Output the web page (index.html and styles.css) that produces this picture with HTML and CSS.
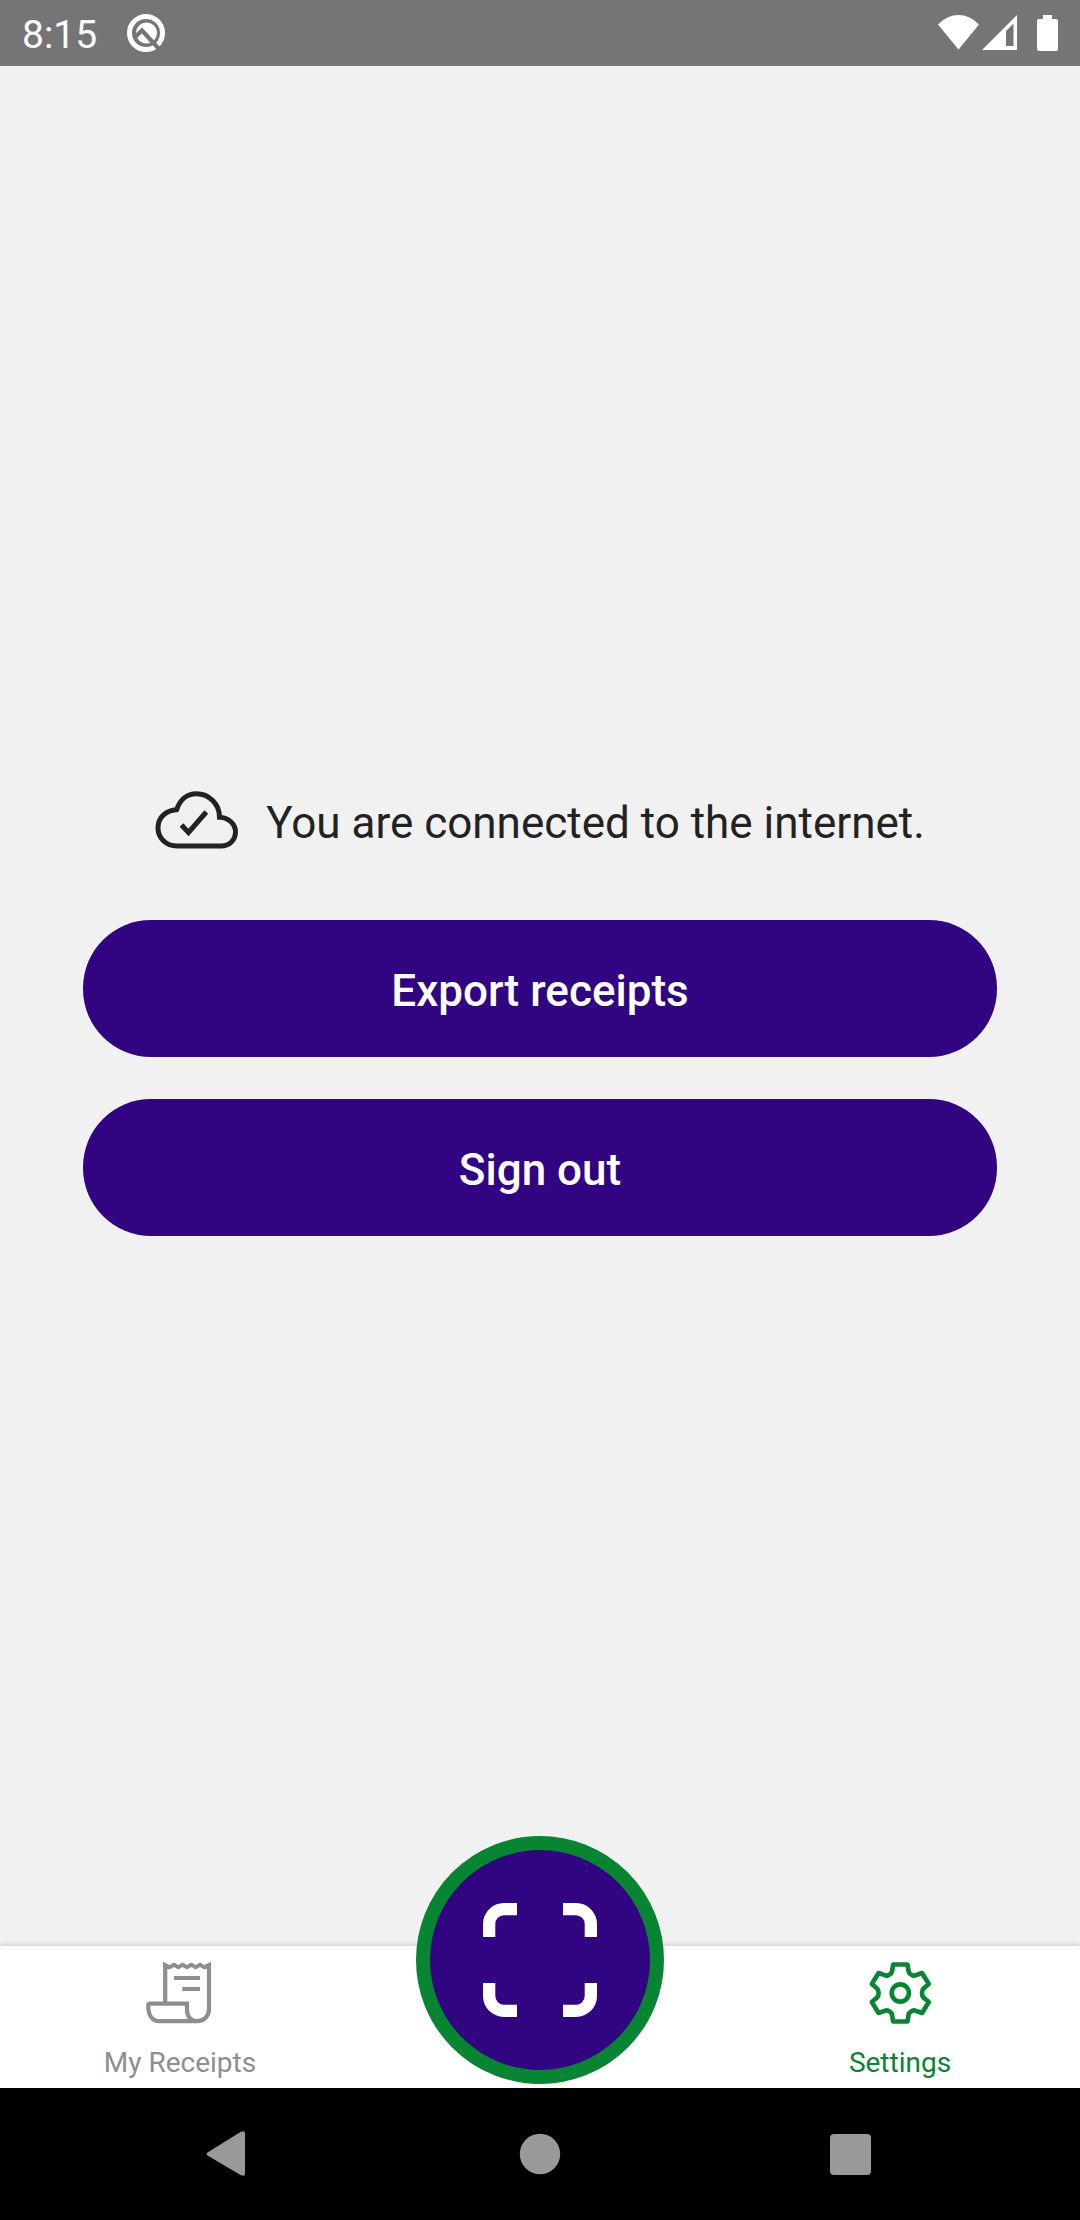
FILE: index.html
```html
<!DOCTYPE html>
<html lang="en">
<head>
<meta charset="utf-8">
<meta name="viewport" content="width=device-width, initial-scale=1">
<title>Settings</title>
<link rel="stylesheet" href="styles.css">
</head>
<body>
<header class="status">
  <span class="status-time">8:15</span>
  <svg class="status-app" width="40" height="40" viewBox="0 0 40 40" fill="none" aria-hidden="true">
    <circle cx="20" cy="20" r="16.5" stroke="#fff" stroke-width="5"/>
    <circle cx="20.500" cy="20" r="10.500" fill="#fff"/>
    <path d="M8 25 16 17.500 34 37" stroke="#757575" stroke-width="4.200"/>
  </svg>
  <svg class="status-system" width="120" height="40" viewBox="938 13 120 40" fill="#fff" aria-hidden="true">
    <path d="M938 24.500Q947 15 958.500 15T979 24.500L958.500 49.500Z"/>
    <path fill-rule="evenodd" d="M982 50 1017 15V50ZM1006 31V46H1013.500V23.500Z"/>
    <path d="M1043 15h9v4h4q2 0 2 2v28q0 2-2 2h-17q-2 0-2-2v-28q0-2 2-2h4z"/>
  </svg>
</header>

<main class="content">
  <p class="connection">
    <svg width="84" height="88" viewBox="0 0 84 88" fill="none" stroke="#222" stroke-width="5" aria-hidden="true">
      <path d="M23.500 33.500C11 34 3 41 3 52 3 62 11 70 22 70H66C74.500 70 80.500 64 80.500 56 80.500 48 73.500 41.500 64.500 41.200 64.500 28 54 17.800 41.500 17.800 32 17.800 24.500 24 21.500 34.500"/>
      <path d="M26.500 49 33.500 56.500 51.300 36"/>
    </svg>
    <span class="connection-text">You are connected to the internet.</span>
  </p>
  <div class="actions">
    <button class="action" type="button">Export receipts</button>
    <button class="action" type="button">Sign out</button>
  </div>
</main>

<nav class="tabs" aria-label="Main">
  <a class="tab" href="#receipts">
    <svg width="68" height="68" viewBox="0 0 68 68" fill="none" stroke="currentColor" stroke-width="4.200" aria-hidden="true">
      <path d="M19.200 44V7M63 7V50C63 57 58 62.200 51 62.200H14C6 62.200 2.200 56 2.200 46.500 2.200 45 3.200 44.700 4.500 44.700H41V51C41 58 45.500 62.200 51 62.200"/>
      <path d="M28 19H54M36.300 30H54"/>
      <path fill="currentColor" stroke="none" d="M17 2.700 23.700 6 28 3.500 32.300 6 36.500 3.500 41 6 45.300 3.500 49.700 6 54 3.500 58.300 6 65 2.700V8.500L58.300 10.500 54 8 49.700 10.500 45.300 8 41 10.500 36.500 8 32.300 10.500 28 8 23.700 10.500 17 8.500Z"/>
    </svg>
    <span>My Receipts</span>
  </a>
  <button class="scan" type="button" aria-label="Scan receipt">
    <svg width="114" height="114" viewBox="0 0 114 114" fill="none" stroke="#fff" stroke-width="12.300" aria-hidden="true">
      <path d="M34 6.150H21A14.850 14.850 0 0 0 6.150 21V34M80 6.150H93A14.850 14.850 0 0 1 107.850 21V34M34 107.850H21A14.850 14.850 0 0 1 6.150 93V80M80 107.850H93A14.850 14.850 0 0 0 107.850 93V80"/>
    </svg>
  </button>
  <a class="tab tab-active" href="#settings" aria-current="page">
    <svg width="68" height="68" viewBox="0 0 68 68" fill="none" stroke="currentColor" stroke-width="4.600" stroke-linejoin="round" aria-hidden="true">
      <circle cx="34.300" cy="34" r="8.600"/>
      <path d="M27.100 5.500H41.500L42.500 12Q43 14.500 45 15.500L46.500 16.300Q48 17 50 16.200L56 14 62.800 25 57.500 29.500Q56 31 56 34T57.500 38.500L62.800 43 56 54 50 51.800Q48 51 46.500 51.700L45 52.500Q43 53.500 42.500 56L41.500 62.500H27.100L26.100 56Q25.600 53.500 23.600 52.500L22.100 51.700Q20.600 51 18.600 51.800L12.600 54 5.800 43 11.100 38.500Q12.600 37 12.600 34T11.100 29.500L5.800 25 12.600 14 18.600 16.200Q20.600 17 22.100 16.300L23.600 15.500Q25.600 14.500 26.100 12Z"/>
    </svg>
    <span>Settings</span>
  </a>
</nav>

<div class="system-nav">
  <button class="key" type="button" aria-label="Back">
    <svg width="48" height="48" viewBox="0 0 48 48" fill="#999" aria-hidden="true"><path d="M1.500 22.500 34.500 2Q39 0 39 3.500V43.500Q39 47 34.500 45L1.500 25.500Q-.5 24 1.500 22.500Z"/></svg>
  </button>
  <button class="key" type="button" aria-label="Home">
    <svg width="48" height="48" viewBox="0 0 48 48" fill="#999" aria-hidden="true"><circle cx="24" cy="24" r="20.200"/></svg>
  </button>
  <button class="key" type="button" aria-label="Recent apps">
    <svg width="48" height="48" viewBox="0 0 48 48" fill="#999" aria-hidden="true"><rect x="4" y="4" width="41" height="41" rx="4"/></svg>
  </button>
</div>
</body>
</html>
```
FILE: styles.css
```css
* {
  box-sizing: border-box;
}

body {
  margin: 0;
  min-height: 100vh;
  display: flex;
  flex-direction: column;
  background: #f1f1f1;
  color: #222;
  font-family: Roboto, "Liberation Sans", sans-serif;
}

button {
  border: 0;
  padding: 0;
  font-family: inherit;
  cursor: pointer;
}

svg {
  display: block;
  flex: none;
}

.status {
  display: flex;
  align-items: center;
  padding: 7px 22px;
  background: #757575;
  color: #fff;
}

.status-time {
  padding-top: 4px;
  font-size: 39px;
  line-height: 48px;
}

.status-app {
  margin-left: 29px;
}

.status-system {
  margin-left: auto;
}

.content {
  flex: 1;
  display: flex;
  flex-direction: column;
  justify-content: center;
  gap: 56px;
  padding: 0 83px;
}

.connection {
  display: flex;
  align-items: center;
  justify-content: center;
  gap: 27px;
  margin: 0;
  font-size: 44px;
  line-height: 52px;
}

.connection-text {
  padding-top: 5px;
}

.actions {
  display: flex;
  flex-direction: column;
  gap: 42px;
}

.action {
  padding: 45px 24px 40px;
  border-radius: 68px;
  background: #310582;
  color: #fff;
  font-size: 44px;
  font-weight: 500;
  line-height: 52px;
}

.tabs {
  display: grid;
  grid-template-columns: repeat(3, 1fr);
  justify-items: center;
  background: #fff;
  box-shadow: 0 -1px 6px rgba(0, 0, 0, 0.16);
}

.tab {
  display: flex;
  flex-direction: column;
  align-items: center;
  gap: 20px;
  padding-top: 13px;
  color: #8e8e8e;
  font-size: 28px;
  line-height: 32px;
  text-decoration: none;
}

.tab-active {
  color: #088533;
}

.scan {
  display: flex;
  align-items: center;
  justify-content: center;
  width: 248px;
  height: 248px;
  margin: -110px 0 4px;
  border: 14px solid #088533;
  border-radius: 50%;
  background: #310582;
}

.system-nav {
  display: flex;
  padding: 42px 75px;
  background: #000;
}

.key {
  flex: 1;
  display: flex;
  justify-content: center;
  background: none;
}
```
